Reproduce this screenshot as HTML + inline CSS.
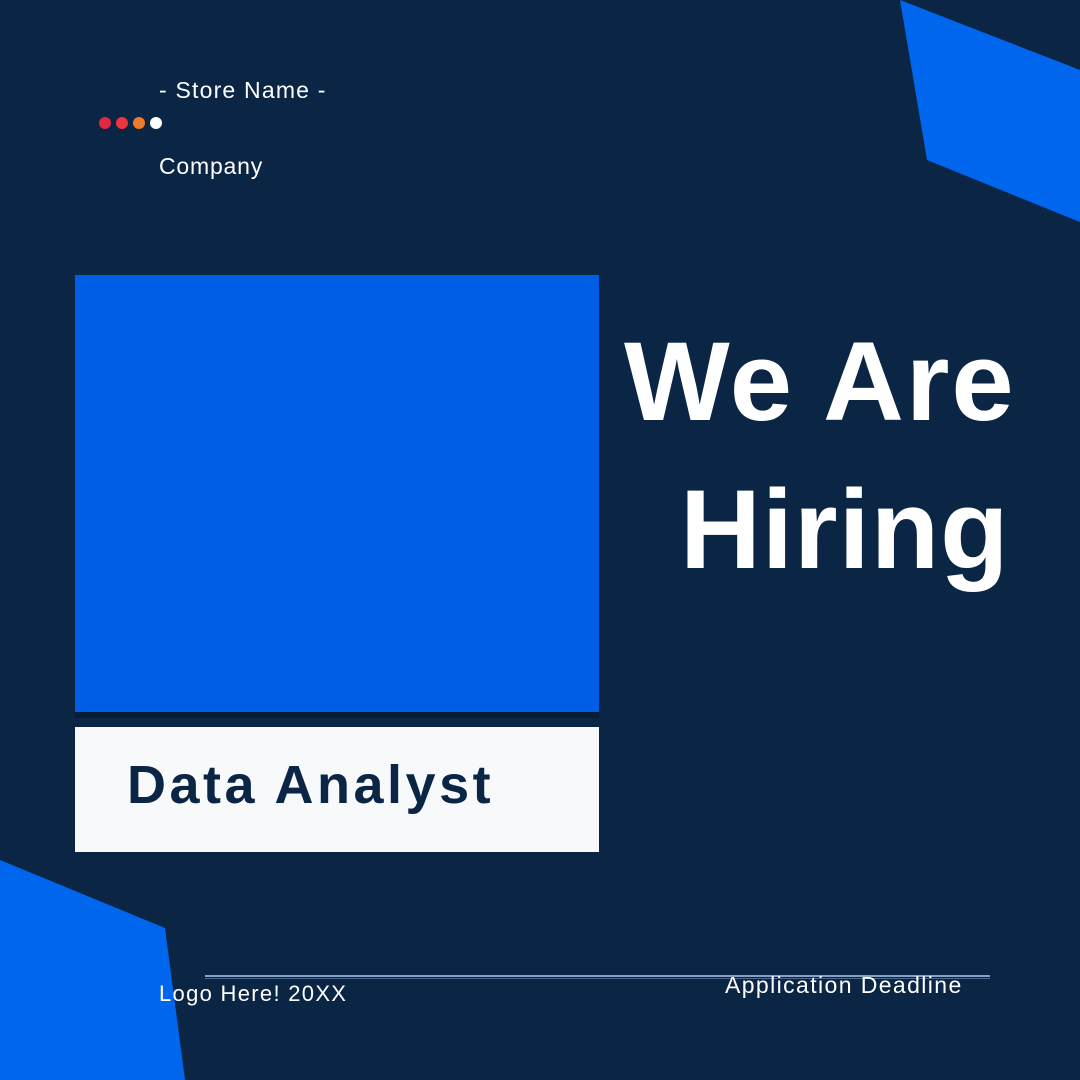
<!DOCTYPE html>
<html><head><meta charset="utf-8"><style>
body{margin:0;width:1080px;height:1080px;background:#0b2545;position:relative;overflow:hidden;font-family:"Liberation Sans",sans-serif;color:#fff}
.t{position:absolute;white-space:nowrap}
</style></head><body>
<svg width="1080" height="1080" style="position:absolute;left:0;top:0">
<polygon points="900,0 1080,70 1080,222 927,160" fill="#0066ee"/>
<polygon points="0,860 165,928 185,1080 0,1080" fill="#0066ee"/>
<rect x="75" y="275" width="524" height="437" fill="#005ee6"/>
<rect x="75" y="712" width="524" height="6" fill="#071c38"/>
<rect x="75" y="727" width="524" height="125" fill="#f8f9fb"/>
<circle cx="105" cy="123" r="6" fill="#e0283e"/>
<circle cx="122" cy="123" r="6" fill="#f0343f"/>
<circle cx="139" cy="123" r="6" fill="#f07a28"/>
<circle cx="156" cy="123" r="6" fill="#fff"/>
<rect x="205" y="975" width="785" height="2" fill="#8aa0c0"/>
<rect x="205" y="978" width="785" height="1" fill="#4a6a95"/>
</svg>
<div class="t" style="left:159px;top:77px;font-size:23px;letter-spacing:1.2px">- Store Name -</div>
<div class="t" style="left:159px;top:153px;font-size:23px;letter-spacing:0.8px">Company</div>
<div class="t" style="left:624px;top:312px;font-size:112px;font-weight:bold;line-height:140px;letter-spacing:2px">We Are</div>
<div class="t" style="left:680px;top:460px;font-size:112px;font-weight:bold;line-height:140px;letter-spacing:1px">Hiring</div>
<div class="t" style="left:127px;top:752px;font-size:54px;font-weight:bold;color:#0b2545;line-height:66px;letter-spacing:3.5px">Data Analyst</div>
<div class="t" style="left:159px;top:981px;font-size:22px;letter-spacing:1.3px">Logo Here! 20XX</div>
<div class="t" style="left:725px;top:972px;font-size:23px;letter-spacing:1.4px">Application Deadline</div>
</body></html>
